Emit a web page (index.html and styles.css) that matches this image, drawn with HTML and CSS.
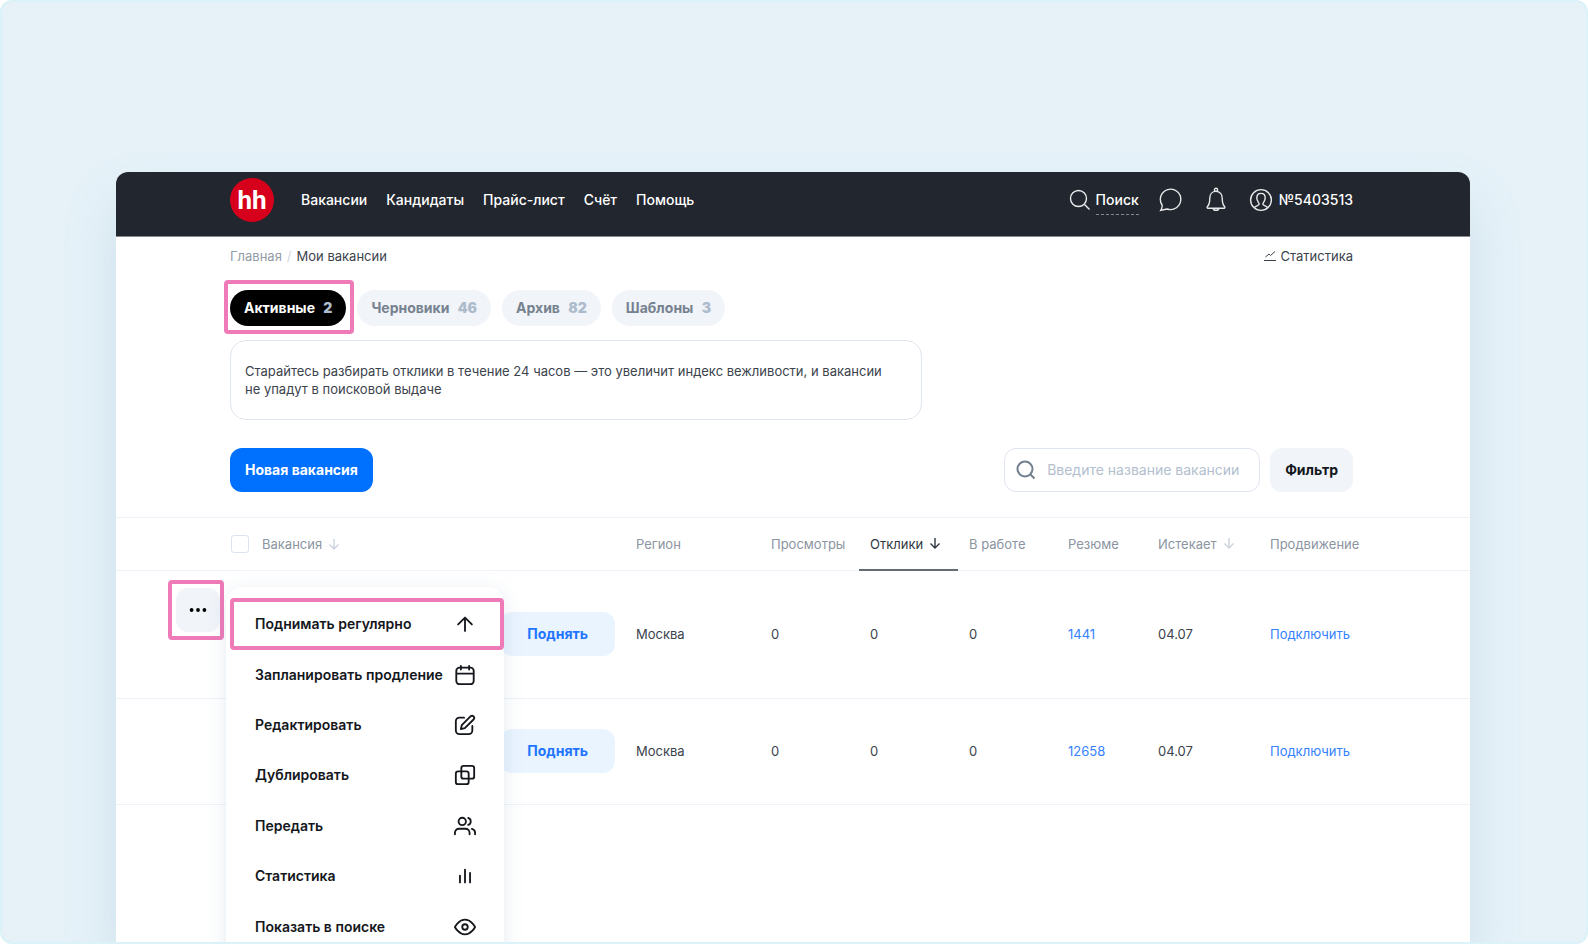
FILE: index.html
```html
<!DOCTYPE html>
<html lang="ru">
<head>
<meta charset="utf-8">
<meta name="viewport" content="width=device-width, initial-scale=1">
<title>Мои вакансии</title>
<link rel="stylesheet" href="styles.css">
</head>
<body>
<svg class="sprite" aria-hidden="true">
  <symbol id="sort" viewBox="0 0 12 12"><path d="M6 1v10M1.500 6.500 6 11l4.500-4.500"/></symbol>
</svg>
<div class="page">
  <div class="window">
    <header class="topbar">
      <a class="logo" href="#">hh</a>
      <nav class="nav">
        <a href="#">Вакансии</a>
        <a href="#">Кандидаты</a>
        <a href="#">Прайс-лист</a>
        <a href="#">Счёт</a>
        <a href="#">Помощь</a>
      </nav>
      <div class="tools">
        <a class="tool-search" href="#">
          <svg class="line" width="22" height="22" viewBox="0 0 22 22"><circle cx="9.500" cy="9.500" r="8"/><path d="m15.500 15.500 5 5"/></svg>
          <span class="dashed">Поиск</span>
        </a>
        <a class="tool-chat" href="#" aria-label="Чат">
          <svg class="line" width="24" height="24" viewBox="0 0 24 24"><path d="M1.800 22.400c1-1.800 1.600-3.600 1.300-5.400A10.200 10.200 0 1 1 8.300 21c-2.100.2-4.300.8-6.500 1.400z"/></svg>
        </a>
        <a class="tool-bell" href="#" aria-label="Уведомления">
          <svg class="line" width="20" height="26" viewBox="0 0 20 26"><circle cx="10" cy="2.800" r="1.600"/><path d="M10 4.400c-4 0-6.200 3-6.200 6.600 0 4.600-.8 7-2.400 8.600-.6.700-.3 1.600.6 1.600h16c.9 0 1.200-.9.600-1.600-1.600-1.600-2.400-4-2.400-8.600 0-3.600-2.200-6.600-6.200-6.600z"/><path d="M7.200 21.600c.3 2.400 5.300 2.400 5.600 0z"/></svg>
        </a>
        <a class="tool-user" href="#">
          <svg class="line" width="24" height="24" viewBox="0 0 24 24"><circle cx="12" cy="12" r="10.400"/><path d="M5.500 19.500c.6-1.800 4.700-1.600 4.700-3.400 0-1.500-2.400-2.600-2.400-6 0-3 1.700-4.700 4.200-4.700s4.200 1.700 4.200 4.700c0 3.400-2.400 4.500-2.400 6 0 1.800 4.100 1.600 4.700 3.400"/></svg>
          <span>№5403513</span>
        </a>
      </div>
    </header>

    <main>
      <div class="content">
        <div class="crumbs">
          <a href="#">Главная</a><span class="slash">/</span><span>Мои вакансии</span>
          <a class="stats" href="#">
            <svg width="12" height="12" viewBox="0 0 12 12"><path d="M0 10.500h12M1.500 7 5 4l1.500 1.500L11 1.500"/></svg>
            Статистика
          </a>
        </div>

        <div class="tabs">
          <button class="tab active marked" type="button">Активные <b>2</b></button>
          <button class="tab" type="button">Черновики <b>46</b></button>
          <button class="tab" type="button">Архив <b>82</b></button>
          <button class="tab" type="button">Шаблоны <b>3</b></button>
        </div>

        <p class="notice">Старайтесь разбирать отклики в течение 24 часов — это увеличит индекс вежливости, и вакансии<br>не упадут в поисковой выдаче</p>

        <div class="actions">
          <button class="btn primary" type="button">Новая вакансия</button>
          <label class="search">
            <svg width="20" height="20" viewBox="0 0 20 20"><circle cx="9" cy="9" r="7.500"/><path d="m14.500 14.500 4 4"/></svg>
            <input type="text" aria-label="Название вакансии" placeholder="Введите название вакансии">
          </label>
          <button class="btn muted" type="button">Фильтр</button>
        </div>
      </div>

      <table class="vacancies">
        <colgroup>
          <col class="c-gutter"><col><col class="c-region"><col class="c-num"><col class="c-num"><col class="c-num"><col class="c-resume"><col class="c-date"><col class="c-promo">
        </colgroup>
        <thead>
          <tr>
            <td></td>
            <th><div class="pick"><input type="checkbox" id="all"><label for="all">Вакансия</label><svg class="sort"><use href="#sort"/></svg></div></th>
            <th>Регион</th>
            <th>Просмотры</th>
            <th class="sorted">Отклики<svg class="sort"><use href="#sort"/></svg></th>
            <th>В работе</th>
            <th>Резюме</th>
            <th>Истекает<svg class="sort"><use href="#sort"/></svg></th>
            <th>Продвижение</th>
          </tr>
        </thead>
        <tbody>
          <tr class="row-open">
            <td class="gutter">
              <button class="more marked" type="button" aria-label="Действия">
                <svg width="18" height="4" viewBox="0 0 18 4"><circle cx="2.600" cy="2" r="1.900"/><circle cx="9" cy="2" r="1.900"/><circle cx="15.400" cy="2" r="1.900"/></svg>
              </button>
            </td>
            <td class="vacancy">
              <button class="btn raise" type="button">Поднять</button>
              <div class="menu">
                <button class="marked" type="button"><span>Поднимать регулярно</span><svg viewBox="0 0 24 24"><path d="M12 19.500V5M4.500 12.500 12 5l7.500 7.500"/></svg></button>
                <button type="button"><span>Запланировать продление</span><svg viewBox="0 0 24 24"><rect x="2.500" y="4" width="19" height="18" rx="3.500"/><path d="M3 10.500h18M7.500 2v4M16.500 2v4"/></svg></button>
                <button type="button"><span>Редактировать</span><svg viewBox="0 0 24 24"><path d="M11 4H6a4 4 0 0 0-4 4v10a4 4 0 0 0 4 4h10a4 4 0 0 0 4-4v-5"/><path d="m18 2.700-9.500 9.500-1 4.300 4.300-1L21.300 6a2.300 2.300 0 0 0-3.300-3.300z"/></svg></button>
                <button type="button"><span>Дублировать</span><svg viewBox="0 0 24 24"><rect x="8" y="2" width="14" height="14" rx="2.500"/><rect x="2" y="8" width="14" height="14" rx="2.500"/></svg></button>
                <button type="button"><span>Передать</span><svg viewBox="0 0 24 24"><circle cx="9" cy="7" r="4"/><path d="M1 21v-1.500A4.500 4.500 0 0 1 5.500 15h7a4.500 4.500 0 0 1 4.500 4.500V21M15.500 3.200a4 4 0 0 1 0 7.600M19.500 15.200c2.200.5 3.500 2.200 3.500 4.300V21"/></svg></button>
                <button type="button"><span>Статистика</span><svg viewBox="0 0 24 24"><path d="M6.500 11.500V19M12 5v14M17.500 8.500V19"/></svg></button>
                <button type="button"><span>Показать в поиске</span><svg viewBox="0 0 24 24"><path d="M1 12s4-8 11-8 11 8 11 8-4 8-11 8-11-8-11-8z"/><circle cx="12" cy="12" r="3"/></svg></button>
              </div>
            </td>
            <td>Москва</td><td>0</td><td>0</td><td>0</td>
            <td><a href="#">1441</a></td><td>04.07</td><td><a href="#">Подключить</a></td>
          </tr>
          <tr>
            <td></td>
            <td class="vacancy"><button class="btn raise" type="button">Поднять</button></td>
            <td>Москва</td><td>0</td><td>0</td><td>0</td>
            <td><a href="#">12658</a></td><td>04.07</td><td><a href="#">Подключить</a></td>
          </tr>
        </tbody>
      </table>
    </main>
  </div>
</div>
</body>
</html>
```
FILE: styles.css
```css
* { box-sizing: border-box; }

body {
  margin: 0;
  background: #fff;
  color: #3b434c;
  font: 400 13px/18px Inter, "Liberation Sans", sans-serif;
}

a { color: inherit; text-decoration: none; }

button, input { margin: 0; font: inherit; }

button { border: 0; cursor: pointer; }

svg { flex: none; fill: none; stroke: currentColor; }

.sprite { position: absolute; width: 0; height: 0; }

.page {
  display: flex;
  height: 100vh;
  padding: 170px 116px 0 114px;
  overflow: hidden;
  border: 2px solid #dbf2f9;
  border-radius: 12px;
  background: #e6f2f8;
}

.window {
  flex: 1;
  min-width: 0;
  border-radius: 12px 12px 0 0;
  background: #fff;
  box-shadow: 0 30px 52px rgba(120, 165, 195, 0.22);
}

/* Pink highlight frames */
.marked { position: relative; }

.marked::after {
  content: "";
  position: absolute;
  inset: -8px;
  border: 4px solid #ee7ab8;
  border-radius: 4px;
}

/* Top bar */
.topbar {
  display: flex;
  align-items: center;
  height: 65px;
  padding: 0 117px 8px 114px;
  border-bottom: 1px solid #85888d;
  border-radius: 12px 12px 0 0;
  background: #22262e;
  color: #fff;
  font-size: 14px;
  font-weight: 500;
}

.logo {
  width: 44px;
  height: 44px;
  border-radius: 50%;
  background: #d6001c;
  font: 700 26px/45px Roboto, "Liberation Sans", sans-serif;
  text-align: center;
}

.nav { display: flex; gap: 19px; margin-left: 27px; }

.tools { display: flex; align-items: center; margin-left: auto; }

.tools a { display: flex; align-items: center; }

.line { color: #e8e9ea; stroke-width: 1.4; }

.tool-search { gap: 5px; }
.tool-chat { margin-left: 20px; }
.tool-bell { margin-left: 23px; }
.tool-user { gap: 6px; margin-left: 23px; }

.dashed { position: relative; }

.dashed::after {
  content: "";
  position: absolute;
  inset: auto 0 -6px;
  border-top: 1px dashed #85898e;
}

/* Page heading area */
.content { padding: 10px 117px 25px 114px; }

.crumbs { display: flex; align-items: center; }

.crumbs > a:first-child { color: #929ba6; }

.slash { margin: 0 5px; color: #d0d8e2; }

.stats { display: flex; align-items: center; gap: 4px; margin-left: auto; }

.tabs { display: flex; gap: 11px; margin-top: 25px; }

.tab {
  height: 36px;
  padding: 0 14px;
  border-radius: 18px;
  background: #f1f4f9;
  color: #76828f;
  font-size: 14px;
  font-weight: 700;
  white-space: nowrap;
}

.tab b { margin-left: 5px; color: #adbccc; }

.tab.active { background: #000; color: #fff; }

.tab.active::after { inset: -10px -8px -8px -6px; }

.notice {
  max-width: 692px;
  margin: 14px 0 28px;
  padding: 21px 14px;
  border: 1px solid #dfe5ef;
  border-radius: 16px;
}

.actions { display: flex; gap: 10px; }

.btn {
  height: 44px;
  padding: 0 15px;
  border-radius: 12px;
  font-size: 14px;
  font-weight: 700;
  white-space: nowrap;
}

.primary { margin-right: auto; background: #0070ff; color: #fff; }

.muted { background: #f1f4f9; color: #14171c; }

.search {
  display: flex;
  align-items: center;
  gap: 11px;
  width: 256px;
  height: 44px;
  padding: 0 12px 0 11px;
  border: 1px solid #dfe5ef;
  border-radius: 12px;
  color: #71808f;
  stroke-width: 2;
}

.search input {
  flex: 1;
  min-width: 0;
  padding: 0;
  border: 0;
  outline: 0;
  background: none;
  color: #22262e;
  font-size: 14px;
}

.search input::placeholder { color: #b2c0ce; opacity: 1; }

/* Vacancies table */
.vacancies {
  width: 100%;
  border-collapse: separate;
  border-spacing: 0;
  border-top: 1px solid #eff2f9;
  table-layout: fixed;
}

.c-gutter { width: 104px; }
.c-region { width: 135px; }
.c-num { width: 99px; }
.c-resume { width: 90px; }
.c-date { width: 112px; }
.c-promo { width: 211px; }

.vacancies th, .vacancies td {
  height: 106px;
  padding: 0 0 2px 11px;
  border-bottom: 1px solid #eff2f9;
  text-align: left;
  white-space: nowrap;
}

.vacancies thead th, .vacancies thead td {
  height: 53px;
  padding-bottom: 1px;
  color: #8b949f;
  font-weight: 400;
}

.vacancies .row-open td { height: 128px; }

.vacancies thead .sorted {
  padding-bottom: 0;
  border-bottom: 2px solid #646b74;
  color: #303840;
}

.sort {
  width: 12px;
  height: 12px;
  margin-left: 6px;
  color: #cbd4de;
  stroke-width: 1.4;
}

.sorted .sort { color: #303840; }

.pick { display: flex; align-items: center; }

.pick input {
  width: 18px;
  height: 18px;
  margin-right: 13px;
  appearance: none;
  border: 1px solid #dce3ec;
  border-radius: 3px;
  background: #fff;
}

.vacancies tbody a { color: #3581ff; }

.vacancies .gutter { padding: 17px 0 0 60px; vertical-align: top; }

.more {
  display: flex;
  align-items: center;
  justify-content: center;
  width: 44px;
  height: 44px;
  border-radius: 12px;
  background: #f1f4f9;
  color: #000;
}

.more circle { fill: currentColor; stroke: none; }

.more::after { inset: -8px -4px -8px -8px; }

.vacancies .vacancy { position: relative; padding-right: 10px; text-align: right; }

.raise { padding: 0 27px; background: #eaf4ff; color: #1f75ff; }

/* Row actions menu */
.menu {
  position: absolute;
  z-index: 1;
  top: 16px;
  left: 6px;
  display: grid;
  grid-template-rows: repeat(7, 1fr);
  width: 278px;
  height: 377px;
  padding: 12px 0;
  border-radius: 16px;
  background: #fff;
  box-shadow: 0 4px 20px rgba(112, 144, 176, 0.18);
}

.menu button {
  display: flex;
  align-items: center;
  justify-content: space-between;
  padding: 0 28px 0 29px;
  background: none;
  color: #14171c;
  font-size: 14px;
  font-weight: 600;
}

.menu svg { width: 22px; height: 22px; stroke-width: 2; stroke-linecap: round; stroke-linejoin: round; }

.menu .marked::after { inset: -1px 0 -1px 4px; }
```
